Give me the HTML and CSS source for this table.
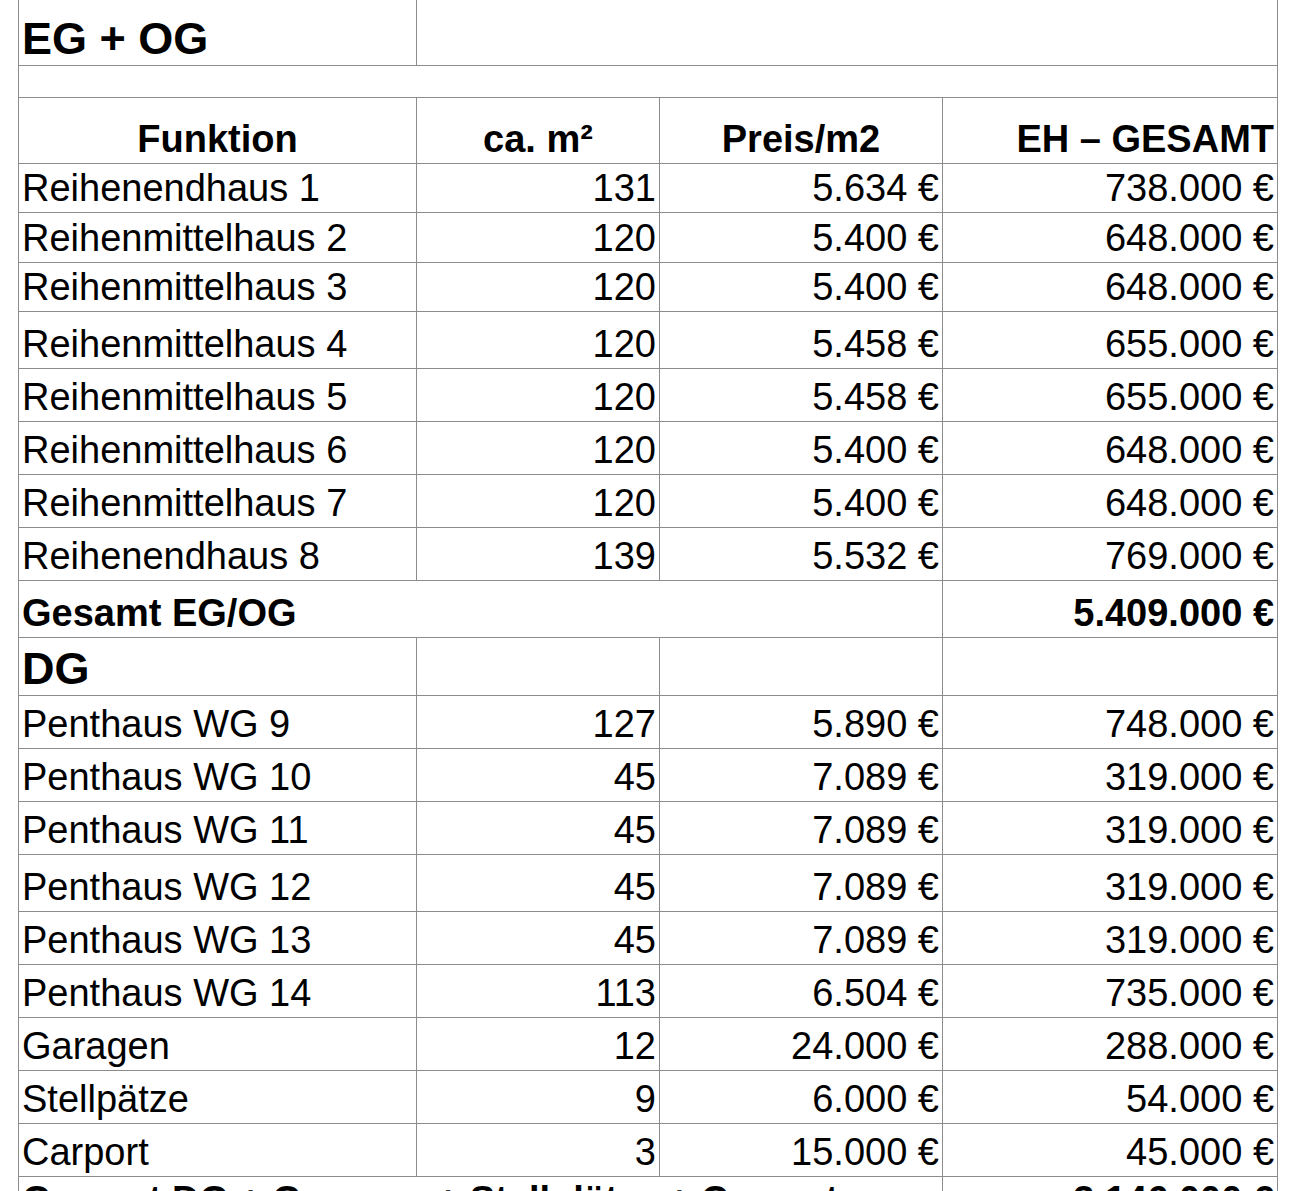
FILE: index.html
```html
<!DOCTYPE html>
<html lang="de">
<head>
<meta charset="utf-8">
<title>EG + OG</title>
<link rel="stylesheet" href="styles.css">
</head>
<body>
<table class="sheet">
  <colgroup>
    <col class="c1"><col class="c2"><col class="c3"><col class="c4">
  </colgroup>
  <tbody>
    <tr class="h65 first"><td class="title">EG + OG</td><td colspan="3"></td></tr>
    <tr class="h32"><td colspan="4"></td></tr>
    <tr class="h66 head">
      <th class="center">Funktion</th>
      <th class="center">ca. m²</th>
      <th class="center">Preis/m2</th>
      <th class="right">EH – GESAMT</th>
    </tr>
    <tr class="h49"><td>Reihenendhaus 1</td><td class="right">131</td><td class="right">5.634 €</td><td class="right">738.000 €</td></tr>
    <tr class="h50"><td>Reihenmittelhaus 2</td><td class="right">120</td><td class="right">5.400 €</td><td class="right">648.000 €</td></tr>
    <tr class="h49"><td>Reihenmittelhaus 3</td><td class="right">120</td><td class="right">5.400 €</td><td class="right">648.000 €</td></tr>
    <tr class="h57"><td>Reihenmittelhaus 4</td><td class="right">120</td><td class="right">5.458 €</td><td class="right">655.000 €</td></tr>
    <tr class="h53"><td>Reihenmittelhaus 5</td><td class="right">120</td><td class="right">5.458 €</td><td class="right">655.000 €</td></tr>
    <tr class="h53"><td>Reihenmittelhaus 6</td><td class="right">120</td><td class="right">5.400 €</td><td class="right">648.000 €</td></tr>
    <tr class="h53"><td>Reihenmittelhaus 7</td><td class="right">120</td><td class="right">5.400 €</td><td class="right">648.000 €</td></tr>
    <tr class="h53"><td>Reihenendhaus 8</td><td class="right">139</td><td class="right">5.532 €</td><td class="right">769.000 €</td></tr>
    <tr class="h57 total"><td colspan="3">Gesamt EG/OG</td><td class="right">5.409.000 €</td></tr>
    <tr class="h58"><td class="title">DG</td><td></td><td></td><td></td></tr>
    <tr class="h53"><td>Penthaus WG 9</td><td class="right">127</td><td class="right">5.890 €</td><td class="right">748.000 €</td></tr>
    <tr class="h53"><td>Penthaus WG 10</td><td class="right">45</td><td class="right">7.089 €</td><td class="right">319.000 €</td></tr>
    <tr class="h53"><td>Penthaus WG 11</td><td class="right">45</td><td class="right">7.089 €</td><td class="right">319.000 €</td></tr>
    <tr class="h57"><td>Penthaus WG 12</td><td class="right">45</td><td class="right">7.089 €</td><td class="right">319.000 €</td></tr>
    <tr class="h53"><td>Penthaus WG 13</td><td class="right">45</td><td class="right">7.089 €</td><td class="right">319.000 €</td></tr>
    <tr class="h53"><td>Penthaus WG 14</td><td class="right">113</td><td class="right">6.504 €</td><td class="right">735.000 €</td></tr>
    <tr class="h53"><td>Garagen</td><td class="right">12</td><td class="right">24.000 €</td><td class="right">288.000 €</td></tr>
    <tr class="h53"><td>Stellpätze</td><td class="right">9</td><td class="right">6.000 €</td><td class="right">54.000 €</td></tr>
    <tr class="h53"><td>Carport</td><td class="right">3</td><td class="right">15.000 €</td><td class="right">45.000 €</td></tr>
    <tr class="h48 total"><td colspan="3">Gesamt DG + Garagen + Stellplätze + Carport</td><td class="right">3.146.000 €</td></tr>
  </tbody>
</table>
</body>
</html>
```

FILE: styles.css
```css
html, body {
  margin: 0;
  padding: 0;
  background: #ffffff;
}

body {
  font-family: "Liberation Sans", Arial, sans-serif;
  color: #000000;
}

.sheet {
  margin-left: 18px;
  border-collapse: collapse;
  table-layout: fixed;
  width: 1259px;
  font-size: 38px;
}

.c1 { width: 398px; }
.c2 { width: 243px; }
.c3 { width: 283px; }
.c4 { width: 335px; }

.sheet td,
.sheet th {
  border: 1px solid #8c8c8c;
  padding: 0 3px 2px 3px;
  vertical-align: bottom;
  text-align: left;
  white-space: nowrap;
  overflow: hidden;
  line-height: 1.1;
  font-weight: normal;
}

.sheet tr.first td {
  border-top: none;
}

.sheet .head th {
  font-weight: bold;
  font-size: 38px;
}

.sheet .center { text-align: center; }
.sheet .right { text-align: right; }

.sheet .title {
  font-size: 45px;
  font-weight: bold;
  padding-bottom: 1px;
}

.sheet .total td {
  font-weight: bold;
  font-size: 38px;
}

.h32 { height: 32px; }
.h48 { height: 48px; }
.h49 { height: 49px; }
.h50 { height: 50px; }
.h53 { height: 53px; }
.h57 { height: 57px; }
.h58 { height: 58px; }
.h65 { height: 65px; }
.h66 { height: 66px; }
```
